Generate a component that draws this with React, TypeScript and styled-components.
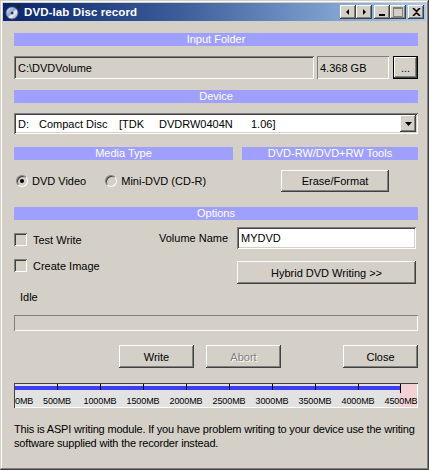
import React from "react";
import styled, { createGlobalStyle, css } from "styled-components";

const Global = createGlobalStyle`
  html, body { margin: 0; padding: 0; background: #D4D0C8; }
  body { font-family: "Liberation Sans", Arial, sans-serif; font-size: 11px; color: #000; }
`;

const FACE = "#D4D0C8";

const raised = css`
  background: ${FACE};
  box-shadow: inset -1px -1px #404040, inset 1px 1px #ffffff, inset -2px -2px #808080, inset 2px 2px ${FACE};
`;
const sunken = css`
  box-shadow: inset 1px 1px #808080, inset -1px -1px #ffffff, inset 2px 2px #404040, inset -2px -2px ${FACE};
`;

const Window = styled.div`
  position: relative;
  width: 429px;
  height: 470px;
  box-sizing: border-box;
  padding: 3px;
  background: ${FACE};
  box-shadow: inset -1px -1px #404040, inset 1px 1px ${FACE}, inset -2px -2px #808080, inset 2px 2px #ffffff;
  display: flex;
  flex-direction: column;
`;

const TitleBar = styled.div`
  height: 18px;
  display: flex;
  align-items: center;
  background: linear-gradient(to right, #0A246A 0%, #3A5A98 40%, #A6CAF0 100%);
  padding: 0 2px 0 2px;
`;

const TitleText = styled.span`
  color: #fff;
  font-weight: bold;
  font-size: 11.5px;
  margin-left: 3px;
  flex: 1;
  letter-spacing: 0.1px;
`;

const CapButton = styled.div<{ $gap?: number }>`
  ${raised};
  width: 16px;
  height: 14px;
  margin-left: ${(p) => p.$gap ?? 0}px;
  display: flex;
  align-items: center;
  justify-content: center;
`;

const Content = styled.div`
  display: flex;
  flex-direction: column;
  padding: 0 8px 0 11px;
`;

const Band = styled.div<{ $mt: number }>`
  height: 13px;
  margin-top: ${(p) => p.$mt}px;
  background: #9F9FFD;
  color: #fff;
  font-size: 11px;
  line-height: 13px;
  text-align: center;
`;

const Row = styled.div<{ $mt: number; $h?: number }>`
  display: flex;
  align-items: center;
  margin-top: ${(p) => p.$mt}px;
  ${(p) => (p.$h ? `height: ${p.$h}px;` : "")}
`;

const Field = styled.div<{ $w: number; $h: number; $bg?: string }>`
  ${sunken};
  width: ${(p) => p.$w}px;
  height: ${(p) => p.$h}px;
  flex: none;
  box-sizing: border-box;
  background: ${(p) => p.$bg ?? FACE};
  display: flex;
  align-items: center;
  padding-left: 4px;
  white-space: pre;
`;

const StaticField = styled.div`
  width: 72px;
  height: 23px;
  box-sizing: border-box;
  margin-left: 3px;
  box-shadow: inset 1px 1px #808080, inset -1px -1px #ffffff;
  display: flex;
  align-items: center;
  padding-left: 3px;
`;

const Button = styled.div<{ $w: number; $h?: number; $ml?: number; $mt?: number; $disabled?: boolean; $default?: boolean }>`
  ${raised};
  width: ${(p) => p.$w}px;
  height: ${(p) => p.$h ?? 23}px;
  flex: none;
  box-sizing: border-box;
  margin-left: ${(p) => p.$ml ?? 0}px;
  margin-top: ${(p) => p.$mt ?? 0}px;
  display: flex;
  align-items: center;
  justify-content: center;
  white-space: nowrap;
  color: ${(p) => (p.$disabled ? "#808080" : "#000")};
  text-shadow: ${(p) => (p.$disabled ? "1px 1px #ffffff" : "none")};
  ${(p) =>
    p.$default &&
    css`
      box-shadow: inset 0 0 0 1px #000, inset -2px -2px #404040, inset 2px 2px #ffffff, inset -3px -3px #808080;
    `}
`;

const PushRight = styled.div`
  margin-left: auto;
`;

const ComboBox = styled.div`
  ${sunken};
  margin-top: 10px;
  height: 21px;
  box-sizing: border-box;
  background: #fff;
  display: flex;
  align-items: center;
  padding: 0 2px 0 4px;
`;

const ComboCol = styled.span<{ $w?: number }>`
  ${(p) => (p.$w ? `width: ${p.$w}px;` : "")}
  white-space: pre;
`;

const DropButton = styled.div`
  ${raised};
  margin-left: auto;
  width: 16px;
  height: 17px;
  display: flex;
  align-items: center;
  justify-content: center;
`;

const Split = styled.div<{ $mt: number }>`
  display: flex;
  margin-top: ${(p) => p.$mt}px;
  gap: 9px;
`;

const Col = styled.div<{ $w?: number }>`
  display: flex;
  flex-direction: column;
  ${(p) => (p.$w ? `width: ${p.$w}px; flex: none;` : "flex: 1;")}
`;

const RadioLabel = styled.label<{ $ml: number }>`
  display: flex;
  align-items: center;
  margin-left: ${(p) => p.$ml}px;
  gap: 4px;
  white-space: nowrap;
`;

const RadioCircle = styled.span<{ $on?: boolean }>`
  position: relative;
  width: 12px;
  height: 12px;
  border-radius: 50%;
  box-sizing: border-box;
  background: ${FACE};
  border: 1px solid;
  border-color: #808080 #ffffff #ffffff #808080;
  box-shadow: inset 1px 1px #404040, inset -1px -1px ${FACE};
  &::after {
    content: "";
    display: ${(p) => (p.$on ? "block" : "none")};
    position: absolute;
    left: 3px;
    top: 3px;
    width: 4px;
    height: 4px;
    border-radius: 50%;
    background: #000;
  }
`;

const CheckLabel = styled.label<{ $mt: number }>`
  display: flex;
  align-items: center;
  gap: 6px;
  margin-top: ${(p) => p.$mt}px;
  height: 13px;
  white-space: nowrap;
`;

const CheckBox = styled.span`
  ${sunken};
  width: 13px;
  height: 13px;
  background: ${FACE};
`;

const VolLabel = styled.span`
  width: 78px;
  flex: none;
  white-space: nowrap;
`;

const StatusText = styled.div`
  margin: 7px 0 0 6px;
  line-height: 13px;
`;

const Progress = styled.div`
  margin-top: 11px;
  height: 16px;
  box-shadow: inset 1px 1px #808080, inset -1px -1px #ffffff;
`;

const Ruler = styled.div`
  position: relative;
  margin-top: 15px;
  height: 25px;
  background: #E2E2E2;
  box-shadow: inset 1px 1px #404040, inset -1px -1px #ffffff;
  overflow: hidden;
`;

const RulerPink = styled.div`
  position: absolute;
  left: 385px;
  top: 1px;
  right: 1px;
  bottom: 1px;
  background: #F2D2D4;
`;

const RulerBar = styled.div`
  position: absolute;
  left: 1px;
  top: 3px;
  height: 4px;
  background: #3C3CF5;
`;

const RulerMark = styled.div<{ $h: number }>`
  position: absolute;
  top: 1px;
  width: 1px;
  height: ${(p) => p.$h}px;
  background: #000;
`;

const RulerLabel = styled.span<{ $left?: boolean }>`
  position: absolute;
  top: 13px;
  font-size: 9px;
  line-height: 10px;
  letter-spacing: -0.1px;
  transform: ${(p) => (p.$left ? "none" : "translateX(-50%)")};
  white-space: nowrap;
  color: #000;
`;

const Note = styled.div`
  margin-top: 14px;
  line-height: 14px;
  letter-spacing: -0.18px;
  white-space: nowrap;
`;

const DiscIcon = () => (
  <svg width="16" height="16" viewBox="0 0 16 16">
    <defs>
      <linearGradient id="cd" x1="0" y1="0" x2="1" y2="1">
        <stop offset="0" stopColor="#e8eef8" />
        <stop offset="0.45" stopColor="#8ea4c8" />
        <stop offset="0.6" stopColor="#f4f4f4" />
        <stop offset="1" stopColor="#6a7fa8" />
      </linearGradient>
    </defs>
    <circle cx="7" cy="9" r="6" fill="url(#cd)" stroke="#5a6a8a" strokeWidth="0.8" />
    <circle cx="7" cy="9" r="1.8" fill="#1c3470" stroke="#c8d0e0" strokeWidth="0.6" />
    <circle cx="13.5" cy="2.5" r="1.8" fill="#222" />
  </svg>
);

const Glyph = ({ kind }: { kind: string }) => {
  if (kind === "left")
    return (
      <svg width="8" height="8" viewBox="0 0 8 8">
        <path d="M5 1 L2 4 L5 7 Z" fill="#000" />
      </svg>
    );
  if (kind === "right")
    return (
      <svg width="8" height="8" viewBox="0 0 8 8">
        <path d="M3 1 L6 4 L3 7 Z" fill="#000" />
      </svg>
    );
  if (kind === "min")
    return (
      <svg width="8" height="8" viewBox="0 0 8 8">
        <rect x="1" y="6" width="6" height="2" fill="#000" />
      </svg>
    );
  if (kind === "max")
    return (
      <svg width="10" height="10" viewBox="0 0 10 10">
        <rect x="0.5" y="0.5" width="9" height="9" fill="none" stroke="#808080" />
        <rect x="1" y="1" width="8" height="1" fill="#808080" />
      </svg>
    );
  return (
    <svg width="9" height="8" viewBox="0 0 9 8">
      <path d="M1 0 L4.5 3.3 L8 0 M1 8 L4.5 4.7 L8 8" stroke="#000" strokeWidth="1.6" fill="none" />
    </svg>
  );
};

const ComboArrow = () => (
  <svg width="7" height="4" viewBox="0 0 7 4">
    <path d="M0 0 H7 L3.5 4 Z" fill="#000" />
  </svg>
);

const ticks = [0, 500, 1000, 1500, 2000, 2500, 3000, 3500, 4000, 4500];

export default function App() {
  return (
    <>
      <Global />
      <Window>
        <TitleBar>
          <DiscIcon />
          <TitleText>DVD-lab Disc record</TitleText>
          <CapButton><Glyph kind="left" /></CapButton>
          <CapButton><Glyph kind="right" /></CapButton>
          <CapButton $gap={2}><Glyph kind="min" /></CapButton>
          <CapButton><Glyph kind="max" /></CapButton>
          <CapButton $gap={2}><Glyph kind="close" /></CapButton>
        </TitleBar>
        <Content>
          <Band $mt={12}>Input Folder</Band>
          <Row $mt={10}>
            <Field $w={300} $h={23}>C:\DVDVolume</Field>
            <StaticField>4.368 GB</StaticField>
            <Button $w={25} $ml={4} $default>...</Button>
          </Row>
          <Band $mt={11}>Device</Band>
          <ComboBox>
            <ComboCol $w={21}>D:</ComboCol>
            <ComboCol $w={80}>Compact Disc</ComboCol>
            <ComboCol $w={40}>[TDK</ComboCol>
            <ComboCol $w={92}>DVDRW0404N</ComboCol>
            <ComboCol>1.06]</ComboCol>
            <DropButton><ComboArrow /></DropButton>
          </ComboBox>
          <Split $mt={13}>
            <Col $w={219}>
              <Band $mt={0}>Media Type</Band>
              <Row $mt={10} $h={22}>
                <RadioLabel $ml={2}>
                  <RadioCircle $on />
                  DVD Video
                </RadioLabel>
                <RadioLabel $ml={19}>
                  <RadioCircle />
                  Mini-DVD (CD-R)
                </RadioLabel>
              </Row>
            </Col>
            <Col>
              <Band $mt={0}>DVD-RW/DVD+RW Tools</Band>
              <Row $mt={10} $h={22}>
                <Button $w={108} $h={22} $ml={39}>Erase/Format</Button>
              </Row>
            </Col>
          </Split>
          <Band $mt={15}>Options</Band>
          <Split $mt={7}>
            <Col>
              <CheckLabel $mt={6}>
                <CheckBox />
                Test Write
              </CheckLabel>
              <CheckLabel $mt={13}>
                <CheckBox />
                Create Image
              </CheckLabel>
            </Col>
            <Col $w={259}>
              <Row $mt={0}>
                <VolLabel>Volume Name</VolLabel>
                <Field $w={179} $h={22} $bg="#ffffff">MYDVD</Field>
              </Row>
              <Button $w={179} $ml={78} $mt={12}>Hybrid DVD Writing &gt;&gt;</Button>
            </Col>
          </Split>
          <StatusText>Idle</StatusText>
          <Progress />
          <Row $mt={14}>
            <Button $w={75} $ml={105}>Write</Button>
            <Button $w={75} $ml={12} $disabled>Abort</Button>
            <PushRight>
              <Button $w={75}>Close</Button>
            </PushRight>
          </Row>
          <Ruler>
            <RulerPink />
            <RulerBar style={{ width: 385 }} />
            {ticks.slice(1, 9).map((t, i) => (
              <RulerMark key={t} $h={6} style={{ left: 43 * (i + 1) }} />
            ))}
            <RulerMark $h={9} style={{ left: 386 }} />
            {ticks.map((t, i) => (
              <RulerLabel key={t} $left={i === 0} style={{ left: i === 0 ? 1 : 43 * i }}>
                {t}MB
              </RulerLabel>
            ))}
          </Ruler>
          <Note>
            This is ASPI writing module. If you have problem writing to your device use the writing
            <br />
            software supplied with the recorder instead.
          </Note>
        </Content>
      </Window>
    </>
  );
}
